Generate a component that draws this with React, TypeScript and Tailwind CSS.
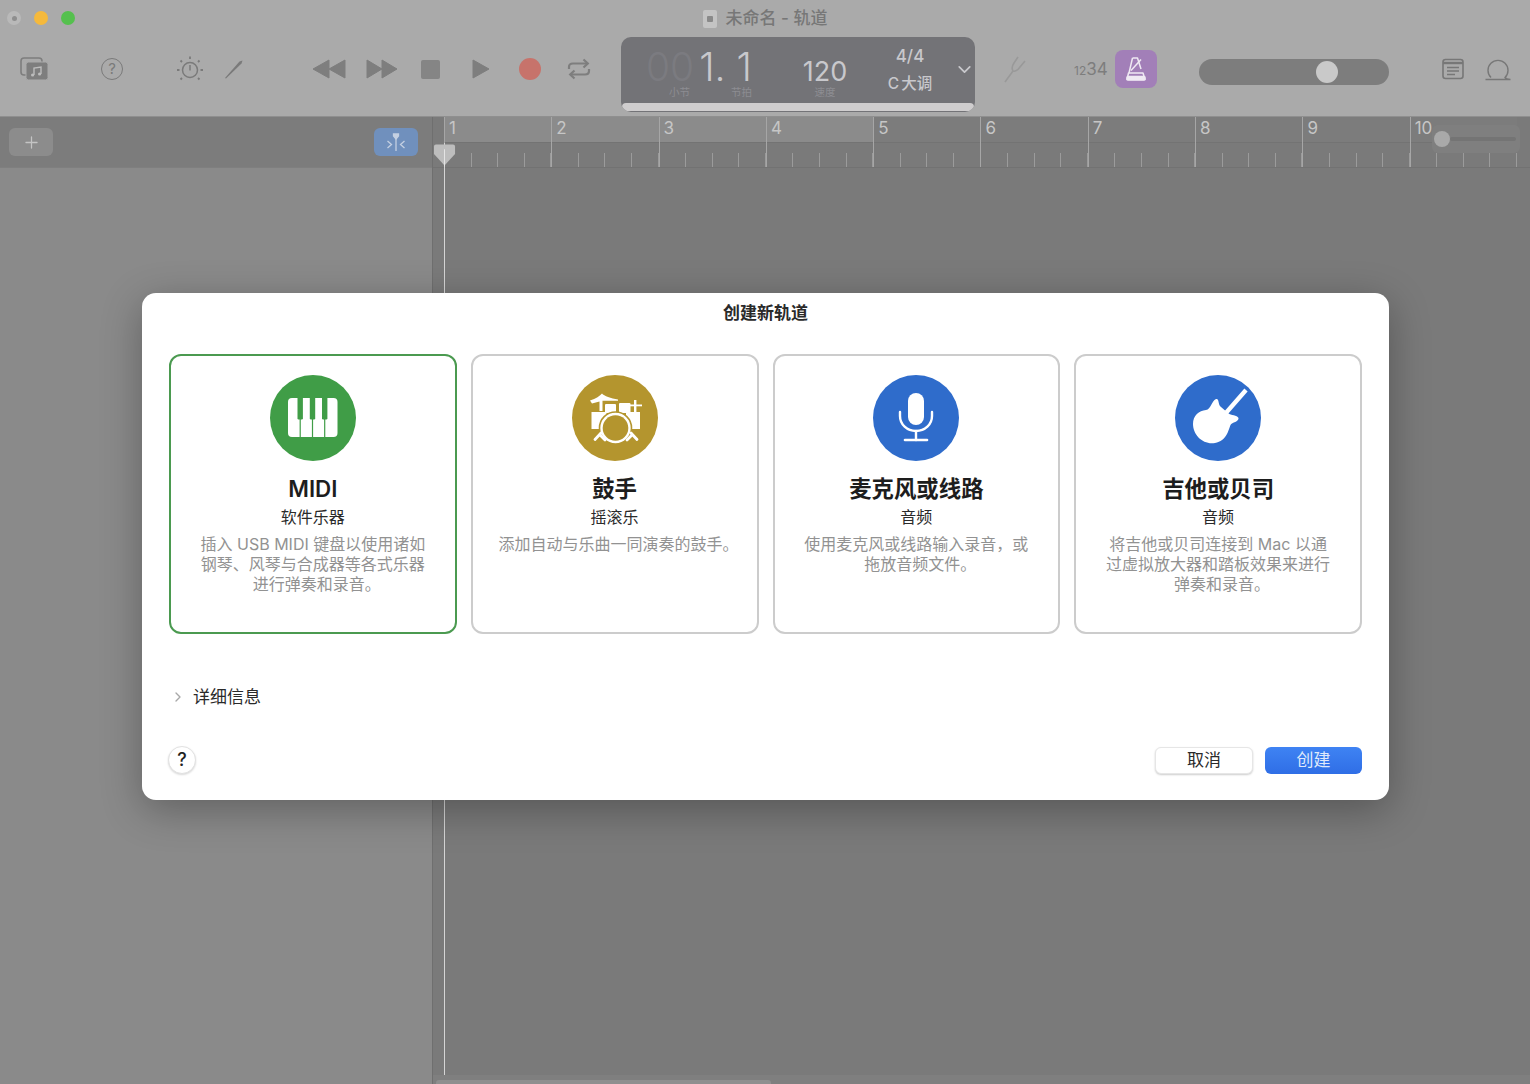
import { ChevronDown, ChevronRight, Plus } from 'lucide-react';

const iconGray = '#7e7e7e';

// Icons for the four track types
const PianoIcon = () => (
  <svg viewBox="0 0 86 86" className="h-[86px] w-[86px]">
    <circle cx="43" cy="43" r="43" fill="#409d47" />
    <rect x="18" y="23" width="49.5" height="39" rx="4" fill="#fff" />
    {[27.5, 39.8, 52].map((x) => (
      <g key={x} fill="#409d47">
        <rect x={x} y="20" width="5.4" height="24.5" rx="1.2" />
        <rect x={x + 2.1} y="42" width="1.2" height="21" />
      </g>
    ))}
  </svg>
);

const DrumsIcon = () => (
  <svg viewBox="0 0 86 86" className="h-[86px] w-[86px]">
    <circle cx="43" cy="43" r="43" fill="#b4952e" />
    <g fill="#fff">
      <path d="M18 25.5 C24 23.5 28 21 30 18.5 C32 21 39 23.5 46 24.5 L46 25.8 L30.5 25.8 L30.5 36 L27.5 36 L27.5 26.5 L20 28.5 Z" />
      <rect x="33" y="29" width="11" height="9" rx="1" />
      <rect x="47" y="28" width="11.5" height="10" rx="1" />
      <rect x="62" y="25" width="2.4" height="12" />
      <rect x="58" y="29.5" width="12" height="1.8" />
      <rect x="19.5" y="37" width="15" height="17" />
      <rect x="54" y="37" width="14" height="17" />
    </g>
    <circle cx="43.5" cy="53" r="16" fill="#fff" stroke="#b4952e" strokeWidth="1.6" />
    <circle cx="43.5" cy="53" r="12.8" fill="#b4952e" />
    <g stroke="#fff" strokeWidth="2.8" strokeLinecap="round" fill="none">
      <path d="M23 64.5 L29 58" />
      <path d="M28 60 L33 65" />
      <path d="M65 64.5 L59 58" />
      <path d="M60 60 L55 65" />
    </g>
  </svg>
);

const MicIcon = () => (
  <svg viewBox="0 0 86 86" className="h-[86px] w-[86px]">
    <circle cx="43" cy="43" r="43" fill="#2f6ccb" />
    <rect x="35" y="18" width="16" height="32" rx="8" fill="#fff" />
    <g stroke="#fff" strokeWidth="2.4" fill="none" strokeLinecap="round">
      <path d="M27 37 V41 C27 49.5 34 56 43 56 C52 56 59 49.5 59 41 V37" />
      <path d="M43 56 V65" />
      <path d="M32 65 H54" strokeWidth="2.6" />
    </g>
  </svg>
);

const GuitarIcon = () => (
  <svg viewBox="0 0 86 86" className="h-[86px] w-[86px]">
    <circle cx="43" cy="43" r="43" fill="#2f6ccb" />
    <path d="M50 39 L71 15" stroke="#fff" strokeWidth="4.4" fill="none" />
    <path
      fill="#fff"
      d="M41 24 C44.5 23 42.5 29 46 32 L53 38 C56 41 62 39.5 63.5 43 C64 47 57 47 55.5 50 C53 56 52 65.5 40 68 C28 70 18 60 18 49 C18 40.5 24 35.5 31 35 C36 34.5 36.5 26 41 24 Z"
    />
  </svg>
);

// Toolbar drawings
const MediaIcon = () => (
  <svg viewBox="0 0 30 24" className="h-[24px] w-[30px]" fill="none">
    <rect x="1" y="1" width="21" height="17" rx="3" stroke={iconGray} strokeWidth="1.6" />
    <rect x="6" y="5" width="22" height="18" rx="2.5" fill={iconGray} stroke="#aaaaaa" strokeWidth="1" />
    <path d="M14 18 V11 L21 10 V17" stroke="#bdbdbd" strokeWidth="1.4" />
    <circle cx="12.6" cy="18" r="1.6" fill="#bdbdbd" />
    <circle cx="19.6" cy="17" r="1.6" fill="#bdbdbd" />
  </svg>
);

const DialIcon = () => (
  <svg viewBox="0 0 28 28" className="h-[28px] w-[28px]" fill="none" stroke="#7a7a7a">
    <circle cx="14" cy="15" r="7.5" strokeWidth="1.5" />
    <path d="M14 10 V15.5" strokeWidth="1.5" />
    <path
      d="M14 1.5 V4 M4.5 5.5 L6 7 M23.5 5.5 L22 7 M1 15 H3.5 M24.5 15 H27 M4.5 24.5 L6 23 M23.5 24.5 L22 23"
      strokeWidth="1.8"
    />
  </svg>
);

const RepeatIcon = () => (
  <svg viewBox="0 0 24 22" className="h-[22px] w-[24px]" fill="none" stroke={iconGray} strokeWidth="2.2">
    <path d="M2 11 V9 C2 6.5 3.5 5.5 6 5.5 H20" />
    <path d="M16.5 1.5 L20.8 5.5 L16.5 9.5" />
    <path d="M22 11 V13 C22 15.5 20.5 16.5 18 16.5 H4" />
    <path d="M7.5 12.5 L3.2 16.5 L7.5 20.5" />
  </svg>
);

const Metronome = () => (
  <svg viewBox="0 0 24 26" className="h-[26px] w-[24px]" fill="none" stroke="#efe9f3" strokeWidth="1.5">
    <path d="M8.5 2 H13.5 L17 13 M5 17 L8.5 2" strokeLinejoin="round" />
    <path d="M7 14.5 L17 3.5" />
    <path d="M4.5 17 H19 L21 23.5 H3 Z" strokeLinejoin="round" />
    <rect x="3" y="20.5" width="18" height="3.5" rx="1" fill="#efe9f3" />
  </svg>
);

const tracks = [
  {
    title: 'MIDI',
    sub: '软件乐器',
    lines: ['插入 USB MIDI 键盘以使用诸如', '钢琴、风琴与合成器等各式乐器', '进行弹奏和录音。'],
    icon: <PianoIcon />,
    selected: true,
  },
  {
    title: '鼓手',
    sub: '摇滚乐',
    lines: ['添加自动与乐曲一同演奏的鼓手。'],
    icon: <DrumsIcon />,
    selected: false,
  },
  {
    title: '麦克风或线路',
    sub: '音频',
    lines: ['使用麦克风或线路输入录音，或', '拖放音频文件。'],
    icon: <MicIcon />,
    selected: false,
  },
  {
    title: '吉他或贝司',
    sub: '音频',
    lines: ['将吉他或贝司连接到 Mac 以通', '过虚拟放大器和踏板效果来进行', '弹奏和录音。'],
    icon: <GuitarIcon />,
    selected: false,
  },
];

const TrackCard = ({ track }: { track: (typeof tracks)[number] }) => (
  <div
    className={`flex h-[280px] flex-col items-center rounded-[12px] bg-white pt-[19px] ${
      track.selected ? 'border-[2.5px] border-[#4b9a50]' : 'border-[2px] border-[#cccccc]'
    }`}
  >
    {track.icon}
    <h3 className="mt-[13px] text-[22.4px] leading-[30px] font-semibold text-[#1d1d1d]">{track.title}</h3>
    <p className="mt-[1px] text-[16px] leading-[24px] text-[#2a2a2a]">{track.sub}</p>
    <div className="mt-[5px] text-center text-[16px] leading-[20px] whitespace-nowrap text-[#929292]">
      {track.lines.map((line) => (
        // the closing 。 sits tighter in the original, so nudge those lines over
        <p key={line} className={line.endsWith('。') ? 'pl-[8px]' : ''}>
          {line}
        </p>
      ))}
    </div>
  </div>
);

const bars = [1, 2, 3, 4, 5, 6, 7, 8, 9, 10];

export default function App() {
  return (
    <div className="relative h-[1084px] w-[1530px] overflow-hidden bg-[#7a7a7a] font-['Inter','Noto_Sans_CJK_SC',sans-serif]">
      {/* Toolbar */}
      <header className="h-[117px] border-b border-[#8f8f8f] bg-[#aaaaaa]">
        <div className="relative flex h-[37px] items-center justify-center">
          <div className="absolute top-[11px] left-[7px] flex gap-[13px]">
            <span className="flex h-[14px] w-[14px] items-center justify-center rounded-full bg-[#b9b9b9]">
              <span className="h-[5px] w-[5px] rounded-full bg-[#8e8e8e]" />
            </span>
            <span className="h-[14px] w-[14px] rounded-full bg-[#f5b93c]" />
            <span className="h-[14px] w-[14px] rounded-full bg-[#55c04e]" />
          </div>
          <span className="mr-[9px] flex h-[18px] w-[14px] items-center justify-center rounded-[2px] bg-[#c4c4c4]">
            <span className="h-[6px] w-[6px] rounded-[1px] bg-[#8a8a8a]" />
          </span>
          <span className="text-[17px] leading-none font-medium text-[#777777]">未命名 - 轨道</span>
        </div>

        <div className="flex h-[75px] items-center pb-[11px] pl-[20px]">
          <MediaIcon />
          <span className="ml-[51px] flex h-[22px] w-[22px] items-center justify-center rounded-full border-[1.5px] border-[#7a7a7a] text-[15px] text-[#7a7a7a]">
            ?
          </span>
          <span className="ml-[53px]">
            <DialIcon />
          </span>
          <svg viewBox="0 0 20 20" className="ml-[20px] h-[20px] w-[20px]" fill="#7a7a7a">
            <path d="M1 19 L15.5 2.5 L18.5 1.5 L17.5 4.5 L2 19.5 Z" />
          </svg>
          <svg viewBox="0 0 33 20" className="ml-[69px] h-[20px] w-[33px]" fill={iconGray}>
            <path d="M0 10 L16 1 V19 Z M16 10 L32 1 V19 Z" stroke={iconGray} strokeLinejoin="round" />
          </svg>
          <svg viewBox="0 0 32 20" className="ml-[20px] h-[20px] w-[32px]" fill={iconGray}>
            <path d="M1 1 L16 10 L1 19 Z M16 1 L31 10 L16 19 Z" stroke={iconGray} strokeLinejoin="round" />
          </svg>
          <span className="ml-[23px] h-[19px] w-[19px] rounded-[2px] bg-[#858585]" />
          <svg viewBox="0 0 18 20" className="ml-[32px] h-[20px] w-[18px]" fill={iconGray}>
            <path d="M1 1 L17 10 L1 19 Z" stroke={iconGray} strokeLinejoin="round" />
          </svg>
          <span className="ml-[29px] h-[22px] w-[22px] rounded-full bg-[#c7736b]" />
          <span className="ml-[26px]">
            <RepeatIcon />
          </span>

          {/* LCD */}
          <div className="ml-[30px] flex h-[75px] w-[354px] flex-col self-start overflow-hidden rounded-[10px] bg-[#737377]">
            <div className="flex h-[66px] text-[#c8c8cc]">
              <div className="w-[164px] pl-[25px]">
                <div className="flex h-[49px] items-start pt-[11px] text-[39px] leading-[38px] font-light">
                  <span className="text-[#7b7b80]">00</span>
                  <span className="ml-[5px]">1. 1</span>
                </div>
                <div className="flex text-[10.5px] leading-[14px] text-[#8d8d92]">
                  <span className="ml-[23px]">小节</span>
                  <span className="ml-[41px]">节拍</span>
                </div>
              </div>
              <div className="flex w-[80px] flex-col items-center">
                <span className="mt-[19px] h-[30px] text-[27px] leading-[32px]">120</span>
                <span className="text-[10.5px] leading-[14px] text-[#8d8d92]">速度</span>
              </div>
              <div className="flex w-[90px] flex-col items-center font-medium">
                <span className="mt-[9px] text-[17px] leading-[20px]">4/4</span>
                <span className="mt-[8px] text-[15.5px] leading-[20px]">
                  C<span className="ml-[2px]">大调</span>
                </span>
              </div>
              <ChevronDown className="mt-[22px] -ml-[1px] h-[21px] w-[21px]" strokeWidth={2} />
            </div>
            <div className="mx-px h-[8px] rounded-[4px] bg-[#cfcdce]" />
          </div>

          <svg viewBox="0 0 24 28" className="ml-[28px] h-[28px] w-[24px]" fill="none" stroke="#999999" strokeWidth="1.6">
            <path d="M2 27 L10 16 C8 13 9 11 11 8 L15 2 M10 16 C13 17 15 15 17 12 L22 6" />
          </svg>
          <span className="ml-[47px] w-[36px] text-[17px] leading-none whitespace-nowrap text-[#7d7d7d]">
            <span className="text-[12px]">12</span>34
          </span>
          <span className="ml-[5px] flex h-[38px] w-[42px] items-center justify-center rounded-[8px] bg-[#a27fb8]">
            <Metronome />
          </span>
          <div className="mt-[6px] ml-[42px] flex h-[26px] w-[190px] items-center rounded-full bg-[#7d7d7d] pl-[117px]">
            <span className="h-[22px] w-[22px] rounded-full bg-[#c9c9c9]" />
          </div>
          <svg viewBox="0 0 22 22" className="ml-[53px] h-[22px] w-[22px]" fill="none" stroke="#777777" strokeWidth="1.6">
            <rect x="1" y="1.5" width="20" height="19" rx="2.5" />
            <path d="M1 5 H21" strokeWidth="2.4" />
            <path d="M5 9.5 H17 M5 13 H17 M5 16.5 H13" />
          </svg>
          <svg viewBox="0 0 26 24" className="ml-[21px] h-[24px] w-[26px]" fill="none" stroke="#777777" strokeWidth="1.4">
            <path d="M6 20.5 A10 10 0 1 1 20 20.5 C21 22 23 22.5 25.5 22.5 M0.5 22.5 H25.5" />
          </svg>
        </div>
      </header>

      {/* Tracks header, ruler and work area */}
      <div className="flex h-[967px]">
        <aside className="flex w-[432px] flex-col bg-[#8a8a8a]">
          <div className="flex h-[51px] items-center justify-between border-b border-[#7f7f7f] bg-[#7c7c7c] pr-[14px] pl-[9px]">
            <span className="flex h-[28px] w-[44px] items-center justify-center rounded-[6px] bg-[#8c8c8c]">
              <Plus className="h-[19px] w-[19px] text-[#c4c4c4]" strokeWidth={1.6} />
            </span>
            <span className="flex h-[28px] w-[44px] items-center justify-center rounded-[6px] bg-[#7090bd]">
              <svg viewBox="0 0 20 18" className="h-[18px] w-[20px]" fill="none" stroke="#c4d0e2" strokeWidth="1.3">
                <path d="M10 4 V18" />
                <path d="M7.5 1 H12.5 V3 L10 6 L7.5 3 Z" fill="#c4d0e2" />
                <path d="M1.5 8 L5.5 11.5 L1.5 15 M18.5 8 L14.5 11.5 L18.5 15" />
              </svg>
            </span>
          </div>
          <div className="flex-1" />
        </aside>

        <main className="relative flex-1 border-l border-[#6f6f6f]">
          <div className="flex h-[51px] border-b border-[#727272] pl-[11px]">
            {bars.map((bar) => (
              <div key={bar} className="relative w-[107.3px] shrink-0 border-l border-[#a6a6a6]">
                <div className={`h-[26px] border-b border-[#737373] ${bar < 5 ? 'bg-[#8b8b8b]' : 'bg-[#7c7c7c]'}`}>
                  <span className="ml-[4px] block text-[17px] leading-[22px] text-[#c6c6c6]">{bar}</span>
                </div>
                <div className="flex h-[24px] items-end">
                  {[0, 1, 2, 3].map((tick) => (
                    <span key={tick} className="h-[14px] w-[26.8px] border-r border-[#9b9b9b]" />
                  ))}
                </div>
              </div>
            ))}
          </div>

          {/* Zoom slider over the ruler */}
          <div className="absolute top-[8px] left-[999px] flex h-[28px] w-[88px] items-center rounded-[6px] bg-[#7f7f7f] pl-[2px]">
            <span className="h-[16px] w-[16px] shrink-0 rounded-full bg-[#a9a9a9]" />
            <span className="mr-[4px] h-[4px] flex-1 rounded-full bg-[#747474]" />
          </div>

          {/* Playhead */}
          <div className="absolute top-[26px] bottom-[9px] left-[11px] w-px bg-[#d5d5d5]" />
          <svg viewBox="0 0 24 24" className="absolute top-[26px] left-0 h-[24px] w-[23px]">
            <path d="M1 3 Q1 1 3 1 H21 Q23 1 23 3 V11 L12 23 L1 11 Z" fill="#bdbdbd" />
            <path d="M12 6 V24" stroke="#e6e6e6" strokeWidth="1" />
          </svg>

          {/* Horizontal scroller */}
          <div className="absolute right-0 bottom-0 left-0 h-[9px] bg-[#7f7f7f]">
            <div className="mt-[5px] ml-[3px] h-[4px] w-[335px] rounded-t-[3px] bg-[#8f8f8f]" />
          </div>
        </main>
      </div>

      {/* New track dialog */}
      <div className="absolute top-[293px] left-[142px] h-[507px] w-[1247px] rounded-[14px] bg-white shadow-[0_10px_40px_rgba(0,0,0,0.3)]">
        <h2 className="pt-[9px] text-center text-[17px] leading-[22px] font-semibold text-[#2a2a2a]">创建新轨道</h2>

        <div className="mt-[30px] grid grid-cols-4 gap-[14px] px-[27px]">
          {tracks.map((track) => (
            <TrackCard key={track.title} track={track} />
          ))}
        </div>

        <div className="mt-[51px] flex items-center pl-[28px]">
          <ChevronRight className="h-[16px] w-[16px] text-[#a8a8a8]" strokeWidth={2} />
          <span className="ml-[7px] text-[17px] leading-[24px] text-[#2a2a2a]">详细信息</span>
        </div>

        <div className="mt-[37px] flex items-center justify-between pr-[27px] pl-[26px]">
          <button className="h-[28px] w-[28px] rounded-full border border-[#e2e2e2] bg-white text-[18px] leading-none font-medium text-[#222222] shadow-[0_1px_2px_rgba(0,0,0,0.15)]">
            ?
          </button>
          <div className="flex gap-[12px]">
            <button className="h-[27px] w-[98px] rounded-[6px] border border-[#e6e6e6] bg-white text-[17px] leading-none text-[#2a2a2a] shadow-[0_1px_2px_rgba(0,0,0,0.2)]">
              取消
            </button>
            <button className="h-[27px] w-[97px] rounded-[6px] bg-gradient-to-b from-[#3f83f3] to-[#2f6ee6] text-[17px] leading-none text-[#dfe9fb]">
              创建
            </button>
          </div>
        </div>
      </div>
    </div>
  );
}
